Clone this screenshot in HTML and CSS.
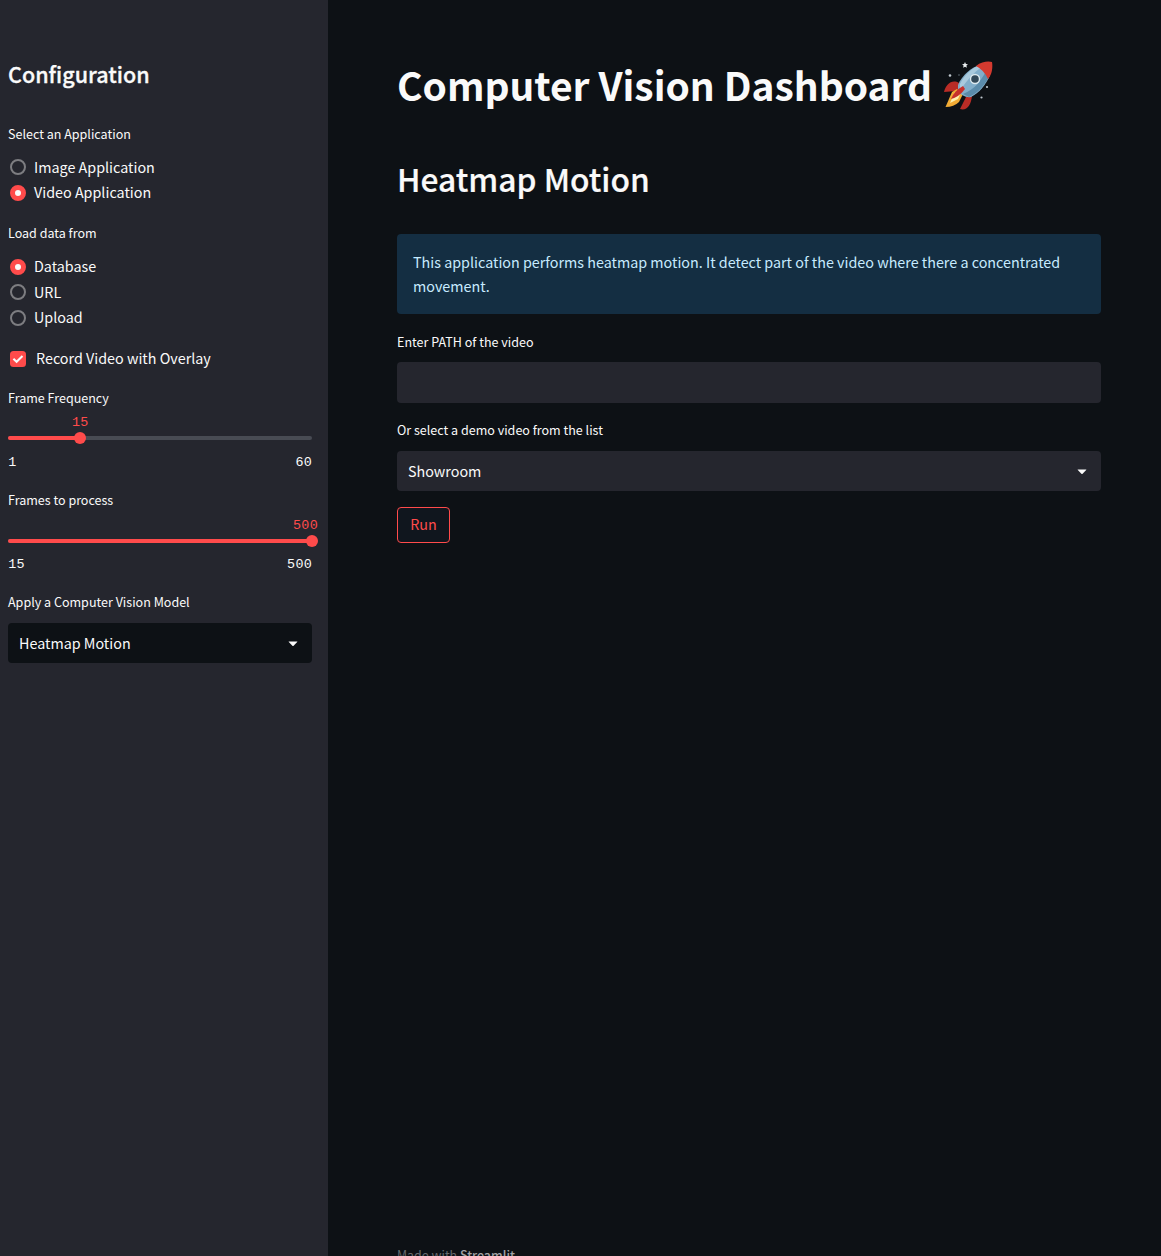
FILE: index.html
```html
<!DOCTYPE html>
<html lang="en">
<head>
<meta charset="utf-8">
<title>Computer Vision Dashboard</title>
<link rel="stylesheet" href="styles.css">
</head>
<body>
<div class="app">
  <aside class="sidebar">
    <h2 class="sidebar-title">Configuration</h2>
    <section class="group">
      <p class="label">Select an Application</p>
      <div class="radios">
        <div class="radio"><span class="dot"></span><span>Image Application</span></div>
        <div class="radio"><span class="dot on"></span><span>Video Application</span></div>
      </div>
    </section>
    <section class="group">
      <p class="label">Load data from</p>
      <div class="radios">
        <div class="radio"><span class="dot on"></span><span>Database</span></div>
        <div class="radio"><span class="dot"></span><span>URL</span></div>
        <div class="radio"><span class="dot"></span><span>Upload</span></div>
      </div>
    </section>
    <div class="checkbox">
      <svg class="check" viewBox="0 0 16 16"><rect width="16" height="16" rx="3.5" fill="#ff4b4b"/><path d="M3.4 7.7 6.6 10.7 12.5 5" fill="none" stroke="#fafafa" stroke-width="2.1"/></svg>
      <span>Record Video with Overlay</span>
    </div>
    <section class="slider">
      <p class="label">Frame Frequency</p>
      <div class="value-row"><span class="value" style="margin-left:63.9px">15</span></div>
      <div class="track"><span class="fill" style="width:72.1px"></span><span class="thumb"></span></div>
      <div class="bounds"><span>1</span><span>60</span></div>
    </section>
    <section class="slider last">
      <p class="label">Frames to process</p>
      <div class="value-row"><span class="value" style="margin-left:284.9px">500</span></div>
      <div class="track"><span class="fill" style="width:304px"></span><span class="thumb"></span></div>
      <div class="bounds"><span>15</span><span>500</span></div>
    </section>
    <section class="field">
      <p class="label">Apply a Computer Vision Model</p>
      <div class="select dark"><span>Heatmap Motion</span><svg class="caret" viewBox="0 0 10 6"><path d="M.9.5H9.1Q9.7.5 9.2 1L5.6 4.8Q5 5.4 4.4 4.8L.8 1Q.3.5.9.5Z"/></svg></div>
    </section>
  </aside>
  <main class="main">
    <h1 class="title"><span>Computer Vision Dashboard</span>
      <svg class="rocket" viewBox="0 0 50 50" role="img" aria-label="Rocket">
        <path d="M15 22C8 18 2 23 0 31L12 30 18 26ZM25 34 22 36 16 48C23 50 27 44 28 35Z" fill="#b92c26"/>
        <path d="M8 31 1.500 46Q10 46 15 41L19 33 13 28Z" fill="#f2ac35"/>
        <path d="M11 31 6 42 14 38 17 31Z" fill="#fff2b0"/>
        <path d="M14 24C18 14 28 6 36 4L46 14C42 24 35 32 27 36Q19 37 14 30Z" fill="#82aeca"/>
        <path d="M16 23C21 13 28 7 36 4L38 6C30 11 23 19 16 30Z" fill="#a9cadd"/>
        <path d="M25 36C34 32 41 24 46 14L42 10C37 20 31 28 19 33Z" fill="#5b8cab"/>
        <path d="M32 5C38 0 45 0 48 1C49 6 48 14 44 18Q40 9 32 5Z" fill="#d43a2f"/>
        <path d="M7 38Q10 30 19 25L21 28Q15 36 7 38Z" fill="#c7302b"/>
        <circle cx="31" cy="18" r="5.200" fill="#dce9ef"/><circle cx="31" cy="18" r="3.800" fill="#334a59"/>
        <path d="m21 1 .9 2 2.100.2-1.600 1.400.5 2.200-1.900-1.100-1.900 1.100.5-2.200L18 3.200l2.100-.2Z" fill="#e9edef"/>
        <circle cx="6" cy="14.500" r="1.300" fill="#bfc8ce"/><circle cx="15" cy="14" r=".8" fill="#65727b"/><circle cx="43" cy="26" r="1.100" fill="#bfc8ce"/><circle cx="37.500" cy="36.500" r="1.100" fill="#bfc8ce"/>
      </svg>
    </h1>
    <h2 class="subtitle">Heatmap Motion</h2>
    <div class="alert">This application performs heatmap motion. It detect part of the video where there a concentrated movement.</div>
    <section class="field path-field">
      <p class="label">Enter PATH of the video</p>
      <div class="input"></div>
    </section>
    <section class="field demo-field">
      <p class="label">Or select a demo video from the list</p>
      <div class="select"><span>Showroom</span><svg class="caret" viewBox="0 0 10 6"><path d="M.9.5H9.1Q9.7.5 9.2 1L5.6 4.8Q5 5.4 4.4 4.8L.8 1Q.3.5.9.5Z"/></svg></div>
    </section>
    <button class="run">Run</button>
    <footer class="footer">Made with <span>Streamlit</span></footer>
  </main>
</div>
</body>
</html>
```
FILE: styles.css
```css
* { box-sizing: border-box; }
body, h1, h2, p { margin: 0; }
body {
  background: #0d1115;
  color: #fafafa;
  font: 14.33px/24px "Noto Sans CJK SC", "Noto Sans", sans-serif;
}
.app { display: flex; height: 1256px; overflow: hidden; }

.sidebar {
  width: 328px;
  flex: none;
  padding: 59px 16px 0 8px;
  background: #25262e;
}
.sidebar-title {
  font-size: 21.55px;
  line-height: 29px;
  font-weight: 500;
  margin-bottom: 34px;
  -webkit-text-stroke: .3px;
}
.label { font-size: 12.54px; line-height: 24px; }
.group { margin-bottom: 16px; }
.radios { padding-top: 8px; }
.radio { display: flex; align-items: center; height: 25.6px; gap: 8px; padding-left: 2px; }
.dot {
  width: 16px;
  height: 16px;
  margin-top: .6px;
  border: 2px solid #7d7d81;
  border-radius: 50%;
}
.dot.on { border: 5px solid #ff4b4b; background: #fafafa; margin-top: 1.2px; }
.radio:nth-child(3) .dot { margin-top: 1.4px; }
.checkbox { display: flex; align-items: center; gap: 10px; height: 24px; padding-left: 2px; margin-bottom: 16px; }
.check { width: 16px; height: 16px; margin-top: 2px; }

.slider { height: 86.2px; margin-bottom: 16px; }
.slider.last { margin-bottom: 15.2px; }
.slider.last .value-row { height: 26.8px; padding-top: .8px; }
.value-row, .bounds { font: 13.4px/26px "Liberation Mono", monospace; letter-spacing: .36px; }
.value-row { height: 26px; display: flex; color: #ff4b4b; }
.track {
  display: flex;
  align-items: center;
  height: 4px;
  border-radius: 4px;
  background: #484b53;
}
.fill { flex: none; height: 4px; border-radius: 4px; background: #ff4b4b; }
.thumb { flex: none; width: 12px; height: 12px; margin-left: -6px; border-radius: 50%; background: #ff4b4b; }
.bounds { display: flex; justify-content: space-between; padding: 10px 0 0 .2px; margin-right: -.2px; }
.slider.last .bounds { padding-top: 9.2px; }

.field .label { margin-bottom: 9px; }
.select {
  display: flex;
  align-items: center;
  justify-content: space-between;
  height: 40px;
  padding: 0 14px 0 11px;
  border-radius: 4px;
  background: #25262e;
}
.select.dark { background: #0d1115; }
.caret { width: 10px; height: 6px; margin-top: 1px; fill: #fafafa; }
.dark .caret { margin-top: 2px; }

.main { width: 704px; margin-left: 69px; display: flex; flex-direction: column; }
.title { display: flex; align-items: center; gap: 12px; margin-top: 58px; height: 53px; font-size: 38.95px; line-height: 53px; font-weight: 700; }
.title span { white-space: nowrap; }
.rocket { width: 50px; height: 50px; margin-top: 2px; }
.subtitle { margin-top: 45px; margin-bottom: 34px; font-size: 31.75px; line-height: 44px; font-weight: 500; -webkit-text-stroke: .2px; }
.alert {
  height: 80px;
  padding: 16px;
  border-radius: 4px;
  background: #142e42;
  color: #c7ebff;
}
.path-field { margin-top: 16px; }
.path-field .label { margin-bottom: 8px; }
.input { height: 41px; border-radius: 4px; background: #25262e; }
.demo-field { margin-top: 15px; }
.run {
  align-self: flex-start;
  width: 53px;
  height: 36px;
  margin-top: 16px;
  padding: 0 0 2px;
  border: 1px solid #ff4b4b;
  border-radius: 4px;
  background: #10161e;
  color: #ff4b4b;
  font: inherit;
}
.footer { margin-top: auto; margin-bottom: -11px; flex: none; font-size: 12.45px; line-height: 24px; color: #66696d; }
.footer span { color: #a0a1a4; font-weight: 500; }
```
